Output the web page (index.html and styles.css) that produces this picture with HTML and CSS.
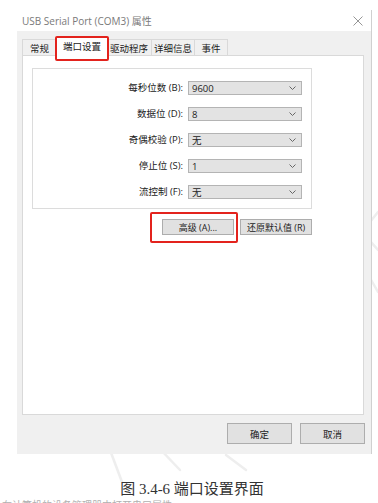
FILE: index.html
```html
<!DOCTYPE html>
<html>
<head>
<meta charset="utf-8">
<link rel="stylesheet" href="styles.css">
</head>
<body>
<div class="page">

  <div class="window">
    <div class="titlebar">
      <span class="title">USB Serial Port (COM3) 属性</span>
      <svg class="close" width="10" height="10" viewBox="0 0 10 10">
        <path d="M0.5 0.5 L9.5 9.5 M9.5 0.5 L0.5 9.5" stroke="#8a8a8a" stroke-width="0.9" fill="none"/>
      </svg>
    </div>

    <div class="client">
      <div class="tabs">
        <div class="tab first">常规</div>
        <div class="tab active marked">端口设置</div>
        <div class="tab wide">驱动程序</div>
        <div class="tab mid">详细信息</div>
        <div class="tab narrow">事件</div>
      </div>

      <div class="panel">
        <div class="group">
          <label>每秒位数 (B):</label>
          <div class="select">9600<svg width="7" height="4" viewBox="0 0 7 4"><path d="M0.5 0.5 L3.5 3.5 L6.5 0.5" stroke="#666" fill="none"/></svg></div>

          <label>数据位 (D):</label>
          <div class="select">8<svg width="7" height="4" viewBox="0 0 7 4"><path d="M0.5 0.5 L3.5 3.5 L6.5 0.5" stroke="#666" fill="none"/></svg></div>

          <label>奇偶校验 (P):</label>
          <div class="select">无<svg width="7" height="4" viewBox="0 0 7 4"><path d="M0.5 0.5 L3.5 3.5 L6.5 0.5" stroke="#666" fill="none"/></svg></div>

          <label>停止位 (S):</label>
          <div class="select">1<svg width="7" height="4" viewBox="0 0 7 4"><path d="M0.5 0.5 L3.5 3.5 L6.5 0.5" stroke="#666" fill="none"/></svg></div>

          <label>流控制 (F):</label>
          <div class="select">无<svg width="7" height="4" viewBox="0 0 7 4"><path d="M0.5 0.5 L3.5 3.5 L6.5 0.5" stroke="#666" fill="none"/></svg></div>
        </div>

        <div class="actions">
          <button class="btn marked-btn">高级 (A)...</button>
          <button class="btn">还原默认值 (R)</button>
        </div>
      </div>

      <div class="footer">
        <button class="btn big">确定</button>
        <button class="btn big">取消</button>
      </div>
    </div>
  </div>

  <div class="caption">图 3.4-6 端口设置界面</div>
  <div class="cutline">在计算机的设备管理器中打开串口属性</div>

  <svg class="watermark" width="378" height="503" viewBox="0 0 378 503">
    <g stroke="#eeeeee" stroke-width="2.5" fill="none" stroke-linecap="round">
      <path d="M378 212 L362 232 L378 250"/>
      <path d="M370 278 L378 292"/>
      <path d="M98 418 L122 482"/>
      <path d="M140 428 L180 470"/>
      <path d="M168 412 L200 446"/>
      <path d="M200 420 Q222 424 232 440"/>
      <path d="M226 455 L246 470"/>
    </g>
  </svg>

</div>
</body>
</html>
```

FILE: styles.css
```css
body {
  margin: 0;
  background-color: #ffffff;
  font-family: "Open Sans", "Noto Sans CJK SC", sans-serif;
}

.page {
  position: relative;
  width: 378px;
  height: 503px;
  overflow: hidden;
}

.watermark {
  position: absolute;
  left: 0;
  top: 0;
  pointer-events: none;
}

.window {
  position: relative;
  z-index: 1;
  margin: 10px 0 0 17px;
  width: 355px;
  border-right: 1px solid #d0d0d0;
  box-sizing: border-box;
}

.titlebar {
  height: 21px;
  display: flex;
  align-items: center;
  justify-content: space-between;
  padding: 0 8px 0 5px;
  background-color: #ffffff;
}

.title {
  font-size: 10px;
  color: #7a7a7a;
}

.client {
  background-color: #f0f0f0;
  padding: 6px 7px 10px 5px;
}

/* tab strip */
.tabs {
  display: flex;
  align-items: flex-end;
  height: 18px;
}

.tab {
  height: 16px;
  box-sizing: border-box;
  border: 1px solid #d9d9d9;
  border-bottom: none;
  border-left: none;
  background-color: #f0f0f0;
  font-size: 9.5px;
  color: #222;
  display: flex;
  align-items: center;
  justify-content: center;
}

.tab.first {
  width: 35px;
  border-left: 1px solid #d9d9d9;
}

.tab.active {
  position: relative;
  z-index: 2;
  width: 54px;
  height: 19px;
  margin: 0 -2px -1px -2px;
  background-color: #ffffff;
  border-left: 1px solid #d9d9d9;
  padding-bottom: 2px;
}

.tab.wide { width: 45px; }
.tab.mid { width: 43px; }
.tab.narrow { width: 33px; }

.marked::after {
  content: "";
  position: absolute;
  left: -1px;
  right: -1px;
  top: -2px;
  bottom: -5px;
  border: 2px solid #e3231d;
  border-radius: 2px;
}

/* page content */
.panel {
  height: 360px;
  box-sizing: border-box;
  background-color: #ffffff;
  border: 1px solid #d9d9d9;
  padding: 12px 0 0 9px;
}

.group {
  width: 280px;
  box-sizing: border-box;
  border: 1px solid #dcdcdc;
  padding: 12px 9px 9px 0;
  display: grid;
  grid-template-columns: 1fr 114px;
  column-gap: 5px;
  row-gap: 12px;
}

.group label {
  font-size: 9.5px;
  color: #222;
  text-align: right;
  line-height: 14px;
}

.select {
  height: 14px;
  box-sizing: border-box;
  background-color: #e3e3e3;
  border: 1px solid #b4b4b4;
  padding: 0 5px 0 3px;
  font-size: 9.5px;
  color: #222;
  display: flex;
  align-items: center;
  justify-content: space-between;
}

.actions {
  width: 280px;
  margin-top: 10px;
  display: flex;
  justify-content: flex-end;
  gap: 6px;
}

.btn {
  width: 72px;
  height: 16px;
  padding: 0;
  margin: 0;
  background-color: #e1e1e1;
  border: 1px solid #adadad;
  border-radius: 0;
  font-family: "Open Sans", "Noto Sans CJK SC", sans-serif;
  font-size: 9px;
  color: #222;
}

.marked-btn {
  position: relative;
}

.marked-btn::after {
  content: "";
  position: absolute;
  left: -13px;
  right: -5px;
  top: -8px;
  bottom: -9px;
  border: 2px solid #e3231d;
  border-radius: 2px;
}

.footer {
  display: flex;
  justify-content: flex-end;
  gap: 8px;
  padding-top: 8px;
  margin-right: -1px;
}

.btn.big {
  width: 65px;
  height: 21px;
  font-size: 9.5px;
}

.caption {
  position: relative;
  z-index: 1;
  margin-top: 25px;
  text-align: center;
  padding-left: 6px;
  font-family: "Liberation Serif", "Noto Sans CJK SC", serif;
  font-size: 15px;
  line-height: 20px;
  color: #333;
}

.cutline {
  padding-left: 2px;
  font-family: "Noto Sans CJK SC", sans-serif;
  font-size: 10px;
  line-height: 12px;
  color: #b0b0b0;
}
```
